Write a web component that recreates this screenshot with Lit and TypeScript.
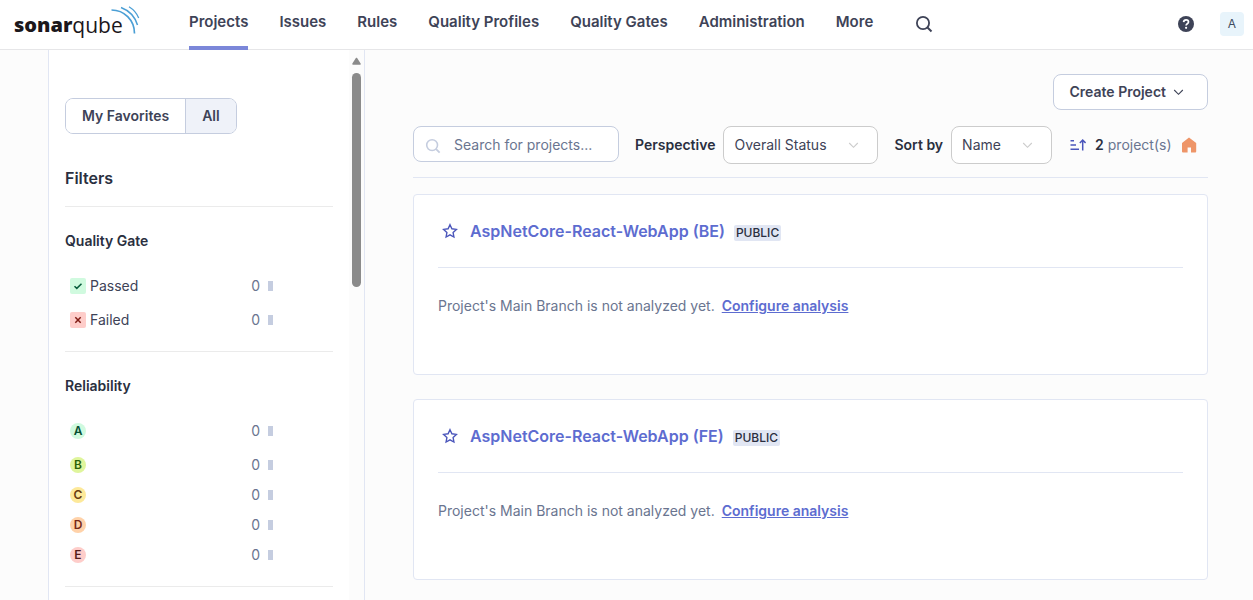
import { LitElement, html, css, svg } from "lit";
import { customElement, property, state } from "lit/decorators.js";
import { classMap } from "lit/directives/class-map.js";

const chevron = svg`<svg class="chevron" width="16" height="16" viewBox="0 0 16 16" aria-hidden="true"><path d="M3.200 6 7.500 10.300 11.800 6" fill="none" stroke="currentColor" stroke-width="1.1"/></svg>`;
const magnifier = html`<svg width="18" height="18" viewBox="0 0 18 18" aria-hidden="true"><circle cx="8" cy="8" r="6.1" fill="none" stroke="currentColor" stroke-width="1.8"/><path d="m12.5 12.5 4 4" stroke="currentColor" stroke-width="2"/></svg>`;

const base = css`
  * { box-sizing: border-box; }
  button, input, select { font: inherit; color: inherit; margin: 0; }
  a { color: inherit; text-decoration: none; }
  h1, h2, h3, p, ul { margin: 0; padding: 0; }
  svg { display: block; flex: none; }
`;

@customElement("sq-header")
class SqHeader extends LitElement {
  static styles = [base, css`
    :host { display: block; }
    .bar { display: flex; height: 50px; padding: 0 9px 0 14px; background: #fff; box-shadow: inset 0 -1px #e6e6e8; color: #3e4357; }
    .logo { display: flex; width: 127px; margin-right: 48px; color: #1b171b; font: 21px/28px "Open Sans", sans-serif; padding-top: 11px; position: relative; }
    .logo b { font-weight: 800; font-size: 20px; }
    .logo span { font-weight: 400; }
    .waves { position: absolute; left: 96px; top: 6px; }
    nav { display: flex; gap: 31px; font-weight: 600; font-size: 15px; }
    nav a { padding: 12px 0 14px; line-height: 20px; border-bottom: 4px solid transparent; }
    nav a.active { border-color: #7b87d9; }
    .icon { border: 0; background: none; padding: 0; display: flex; align-items: center; height: 48px; }
    .search { margin-left: 42px; }
    .help { margin-left: auto; }
    .user { align-self: flex-start; margin: 12px 0 0 26px; width: 24px; height: 24px; border: 0; border-radius: 4px; padding: 0; background: #e8f4fb; color: #3e4b60; font-size: 12px; }
  `];
  render() {
    const items = ["Projects", "Issues", "Rules", "Quality Profiles", "Quality Gates", "Administration", "More"];
    return html`<header class="bar">
      <a class="logo" href="#" aria-label="sonarqube home"><b>sonar</b><span>qube</span>
        <svg class="waves" width="30" height="30" viewBox="0 0 30 30" fill="none" stroke="#4b9fd5" aria-hidden="true">
          <path d="M1.5 4C14 4 24.500 14 24.500 27.500" stroke-width="1.7"/>
          <path d="M11 1.500C19 4.500 25 11 27.500 19" stroke-width="1.500"/>
          <path d="M19 .7C23.500 3.500 26.800 7 28.700 12" stroke-width="1.300"/>
        </svg></a>
      <nav aria-label="Main">${items.map((t, i) => html`<a href="#" class=${i ? "" : "active"}>${t}</a>`)}</nav>
      <button class="icon search" aria-label="Search">${magnifier}</button>
      <button class="icon help" aria-label="Help"><svg width="16" height="16" viewBox="0 0 16 16"><circle cx="8" cy="8" r="8" fill="#3e4357"/><path d="M5.600 6.100C5.700 4.600 6.700 3.800 8.100 3.800c1.500 0 2.400.9 2.400 2.100 0 1.800-2.400 1.800-2.400 3.500" fill="none" stroke="#fff" stroke-width="1.700"/><circle cx="8.100" cy="11.800" r="1.100" fill="#fff"/></svg></button>
      <button class="user" aria-label="Account">A</button>
    </header>`;
  }
}

@customElement("sq-filters")
class SqFilters extends LitElement {
  @state() all = true;
  static styles = [base, css`
    :host { display: flex; flex: none; width: 317px; min-height: 0; overflow: hidden; background: #fff; border: solid #e1e6f3; border-width: 0 1px; }
    .content { flex: 1; padding: 48px 16px 0; }
    .toggle { display: inline-flex; border: 1px solid #c5cddf; border-radius: 8px; overflow: hidden; vertical-align: top; }
    .toggle button { height: 34px; padding: 0 16px; border: 0; background: #fff; font-weight: 600; color: #3e4357; }
    .toggle button + button { border-left: 1px solid #c5cddf; }
    .toggle .on { background: #eff2f9; }
    h2 { margin-top: 32px; padding-bottom: 16px; font-size: 16px; line-height: 24px; font-weight: 600; color: #2a2f40; border-bottom: 1px solid #ebebeb; }
    section { padding: 24px 0 16px; border-bottom: 1px solid #ebebeb; }
    h3 { font-size: 14px; line-height: 20px; font-weight: 600; color: #2a2f40; margin-bottom: 20px; }
    ul { list-style: none; }
    li:first-child { margin-bottom: 4px; }
    .facet { display: flex; align-items: center; width: 100%; height: 30px; padding: 0 60px 0 5px; border: 0; background: none; color: #3e4357; text-align: left; }
    .name { margin-left: 4px; flex: 1; }
    .count { color: #6a7590; margin-right: 8px; }
    .stat { width: 5px; height: 10px; background: #c5cde0; }
    .grade { width: 16px; height: 16px; border-radius: 50%; font-size: 12px; line-height: 16px; font-weight: 600; text-align: center; }
    .grade.a { background: #d0fadf; color: #054f31; }
    .grade.b { background: #dff59c; color: #2b6007; }
    .grade.c { background: #fde99a; color: #693d10; }
    .grade.d { background: #ffd2a9; color: #772917; }
    .grade.e { background: #fecdca; color: #551c1c; }
    .scroll { flex: none; width: 15px; background: #fcfcfc; display: flex; flex-direction: column; align-items: center; padding-top: 7px; gap: 8px; }
    .thumb { width: 9px; height: 214px; border-radius: 5px; background: #8b8b8b; }
  `];
  facet(icon: unknown, name: string, label: string) {
    return html`<li><button class="facet" aria-label=${label}>${icon}<span class="name">${name}</span><span class="count">0</span><span class="stat"></span></button></li>`;
  }
  render() {
    const pass = html`<svg width="16" height="16" viewBox="0 0 16 16"><rect width="16" height="16" rx="2" fill="#d0fadf"/><path d="m4.500 8.200 2.300 2.200 4.700-4.700" fill="none" stroke="#085d3c" stroke-width="1.500"/></svg>`;
    const fail = html`<svg width="16" height="16" viewBox="0 0 16 16"><rect width="16" height="16" rx="2" fill="#fecdca"/><path d="m5.300 5.300 5.400 5.400m0-5.400-5.400 5.400" fill="none" stroke="#801b14" stroke-width="1.500"/></svg>`;
    return html`<div class="content">
        <div class="toggle" role="group" aria-label="Project scope">
          <button class=${classMap({ on: !this.all })} @click=${() => (this.all = false)}>My Favorites</button>
          <button class=${classMap({ on: this.all })} @click=${() => (this.all = true)}>All</button>
        </div>
        <h2>Filters</h2>
        <section><h3>Quality Gate</h3><ul>${this.facet(pass, "Passed", "Passed")}${this.facet(fail, "Failed", "Failed")}</ul></section>
        <section><h3>Reliability</h3><ul>${["A", "B", "C", "D", "E"].map((g) => this.facet(html`<span class="grade ${g.toLowerCase()}">${g}</span>`, "", `Reliability ${g}`))}</ul></section>
      </div>
      <div class="scroll" aria-hidden="true"><svg width="9" height="8" viewBox="0 0 9 8"><path d="M4.500 1.500 8 7H1Z" fill="#8b8b8b" stroke="#8b8b8b" stroke-linejoin="round" stroke-width="1.500"/></svg><div class="thumb"></div></div>`;
  }
}

@customElement("sq-project")
class SqProject extends LitElement {
  @property() name = "";
  static styles = [base, css`
    :host { display: block; background: #fff; border: 1px solid #e1e6f3; border-radius: 4px; padding: 24px 24px 58px; }
    .head { display: flex; align-items: center; height: 49px; padding-bottom: 24px; border-bottom: 1px solid #e1e6f3; }
    .star { border: 0; background: none; padding: 0; margin: 0 12px 0 4px; color: #4b56bb; }
    h3 { font-size: 16px; line-height: 24px; font-weight: 600; color: #5d6cd0; }
    .badge { margin: 3px 0 0 9px; padding: 0 2px; border-radius: 2px; background: #e1e6f3; color: #2a2f40; font-size: 12px; line-height: 16px; font-weight: 500; }
    p { padding-top: 28px; line-height: 20px; color: #6a7590; display: flex; gap: 7px; }
    p a { color: #5d6cd0; font-weight: 600; text-decoration: underline; }
  `];
  render() {
    return html`<div class="head">
        <button class="star" aria-label="Add to favorites"><svg width="16" height="16" viewBox="0 0 16 16"><path d="m8 1.700 1.900 4.100 4.500.6-3.300 3.100.8 4.500L8 11.800 4.100 14l.8-4.500L1.600 6.400l4.500-.6Z" fill="none" stroke="currentColor" stroke-width="1.400"/></svg></button>
        <h3><a href="#">${this.name}</a></h3><span class="badge">PUBLIC</span>
      </div>
      <p><span>Project's Main Branch is not analyzed yet.</span><a href="#">Configure analysis</a></p>`;
  }
}

@customElement("app-root")
class AppRoot extends LitElement {
  static styles = [base, css`
    :host { display: flex; flex-direction: column; height: 100vh; overflow: hidden; background: #fcfcfc; color: #3e4357; font: 14px/20px Inter, sans-serif; }
    sq-header { flex: none; }
    .body { display: flex; flex: 1; min-height: 0; padding-left: 48px; }
    main { flex: 1; min-width: 0; padding: 24px 45px 20px 48px; overflow: hidden; }
    .actions { display: flex; justify-content: flex-end; margin-bottom: 16px; }
    .create { display: flex; align-items: center; gap: 5px; height: 36px; padding: 0 20px 0 16px; border: 1px solid #c5cddf; border-radius: 8px; background: #fff; font-weight: 600; }
    .toolbar { display: flex; align-items: flex-start; padding-bottom: 13px; border-bottom: 1px solid #e1e6f3; margin-bottom: 16px; }
    .search { position: relative; width: 206px; color: #c5cddf; }
    .search svg { position: absolute; left: 12px; top: 12px; width: 16px; height: 16px; }
    .search input { display: block; width: 100%; height: 36px; padding: 0 12px 0 40px; border: 1px solid #c5cddf; border-radius: 8px; background: #fff; color: #3e4357; }
    .search input::placeholder { color: #6a7590; opacity: 1; }
    label { font-weight: 600; color: #2a2f40; line-height: 38px; margin: 0 8px 0 16px; }
    .pick { position: relative; color: #cccccc; }
    .pick select { appearance: none; display: block; width: 100%; height: 38px; padding: 0 10px; border: 1px solid #cccccc; border-radius: 8px; background: #fff; color: #3e4357; }
    .pick .chevron { position: absolute; right: 16px; top: 11px; }
    .perspective { width: 155px; }
    .sort { width: 101px; }
    .order { border: 0; background: none; padding: 0; margin: 11px 9px 0 18px; color: #4b56bb; }
    .total { line-height: 38px; color: #6a7590; }
    .total b { font-weight: 600; color: #2a2f40; }
    .home { margin: 11px 0 0 9px; color: #ee9568; }
    .list { display: flex; flex-direction: column; gap: 24px; }
  `];
  render() {
    return html`<sq-header></sq-header>
      <div class="body">
        <sq-filters></sq-filters>
        <main>
          <div class="actions"><button class="create">Create Project ${chevron}</button></div>
          <div class="toolbar">
            <div class="search">${magnifier}<input type="text" aria-label="Search for projects" placeholder="Search for projects..."></div>
            <label for="perspective">Perspective</label>
            <div class="pick perspective"><select id="perspective"><option>Overall Status</option><option>New Code</option></select>${chevron}</div>
            <label for="sort">Sort by</label>
            <div class="pick sort"><select id="sort"><option>Name</option><option>Size</option></select>${chevron}</div>
            <button class="order" aria-label="Reverse sort order"><svg width="16" height="16" viewBox="0 0 16 16" fill="none" stroke="currentColor" stroke-width="1.500"><path d="M.5 3.700h3.500M.5 8h5.500M.5 12.300h8.500M12.700 13.500V3.500M9.800 6l2.900-2.900L15.600 6"/></svg></button>
            <span class="total"><b>2</b> project(s)</span>
            <a class="home" href="#" aria-label="Set as homepage"><svg width="16" height="16" viewBox="0 0 16 16"><path d="M8 .6 15.200 6v8.400a1 1 0 0 1-1 1H10v-5H6.600v5H2a1 1 0 0 1-1-1V6Z" fill="currentColor"/></svg></a>
          </div>
          <div class="list">
            <sq-project name="AspNetCore-React-WebApp (BE)"></sq-project>
            <sq-project name="AspNetCore-React-WebApp (FE)"></sq-project>
          </div>
        </main>
      </div>`;
  }
}
